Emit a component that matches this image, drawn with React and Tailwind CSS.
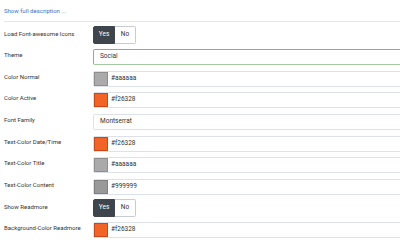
import React from 'react';

const rows = [
  { label: 'Load Font-awesome Icons', type: 'toggle' },
  { label: 'Theme', type: 'text', value: 'Social', focus: true },
  { label: 'Color Normal', type: 'color', value: '#aaaaaa', swatch: 'bg-[#aaaaaa]', edge: 'border-[#8f8f8f]' },
  { label: 'Color Active', type: 'color', value: '#f26328', swatch: 'bg-[#f26328]', edge: 'border-[#c9481a]' },
  { label: 'Font Family', type: 'text', value: 'Montserrat' },
  { label: 'Text-Color Date/Time', type: 'color', value: '#f26328', swatch: 'bg-[#f26328]', edge: 'border-[#c9481a]' },
  { label: 'Text-Color Title', type: 'color', value: '#aaaaaa', swatch: 'bg-[#aaaaaa]', edge: 'border-[#8f8f8f]' },
  { label: 'Text-Color Content', type: 'color', value: '#999999', swatch: 'bg-[#999999]', edge: 'border-[#808080]' },
  { label: 'Show Readmore', type: 'toggle' },
  { label: 'Background-Color Readmore', type: 'color', value: '#f26328', swatch: 'bg-[#f26328]', edge: 'border-[#c9481a]' },
];

const Toggle = () => (
  <div className="flex shrink-0 h-[18px] -mt-[1px] text-[6.5px]">
    <div className="w-[22px] flex items-center justify-center bg-[#3e454d] text-white rounded-l-[2px] border border-[#3e454d]">Yes</div>
    <div className="w-[21px] flex items-center justify-center bg-white text-[#333] rounded-r-[2px] border border-l-0 border-[#c8ccd2]">No</div>
  </div>
);

const Field = ({ row }) => (
  <div
    className={`shrink-0 w-[320px] h-[16px] flex items-center bg-white border rounded-[2px] text-[6.5px] text-[#333] ${
      row.focus ? 'border-[#8fab8f] border-b-[#a3c9a3]' : 'border-[#dde2ea]'
    }`}
  >
    {row.type === 'color' ? (
      <>
        <div className={`w-[14px] h-[14px] border ${row.swatch} ${row.edge}`} />
        <span className="ml-[3px]">{row.value}</span>
      </>
    ) : (
      <span className="ml-[6px]">{row.value}</span>
    )}
  </div>
);

export default function App() {
  const heights = [22, 22, 21, 22, 22, 21, 22, 21, 22, 22];
  return (
    <div className="w-[400px] h-[240px] overflow-hidden bg-white font-['Roboto','Liberation_Sans',sans-serif]">
      <div className="h-[21px] flex items-center px-[4px] text-[6px] text-[#3574c4]">Show full description ...</div>
      <div className="h-[1px] bg-[#e6e6e6] ml-[4px]" />
      <div className="pt-[5px] pl-[4px] flex flex-col">
        {rows.map((row, i) => (
          <div key={i} className="flex items-start" style={{ height: heights[i] }}>
            <div className={`w-[89px] shrink-0 whitespace-nowrap text-[6px] text-[#333] ${row.type === 'toggle' ? 'leading-[14px]' : 'leading-[12px]'}`}>
              {row.label}
            </div>
            {row.type === 'toggle' ? <Toggle /> : <Field row={row} />}
          </div>
        ))}
      </div>
    </div>
  );
}
